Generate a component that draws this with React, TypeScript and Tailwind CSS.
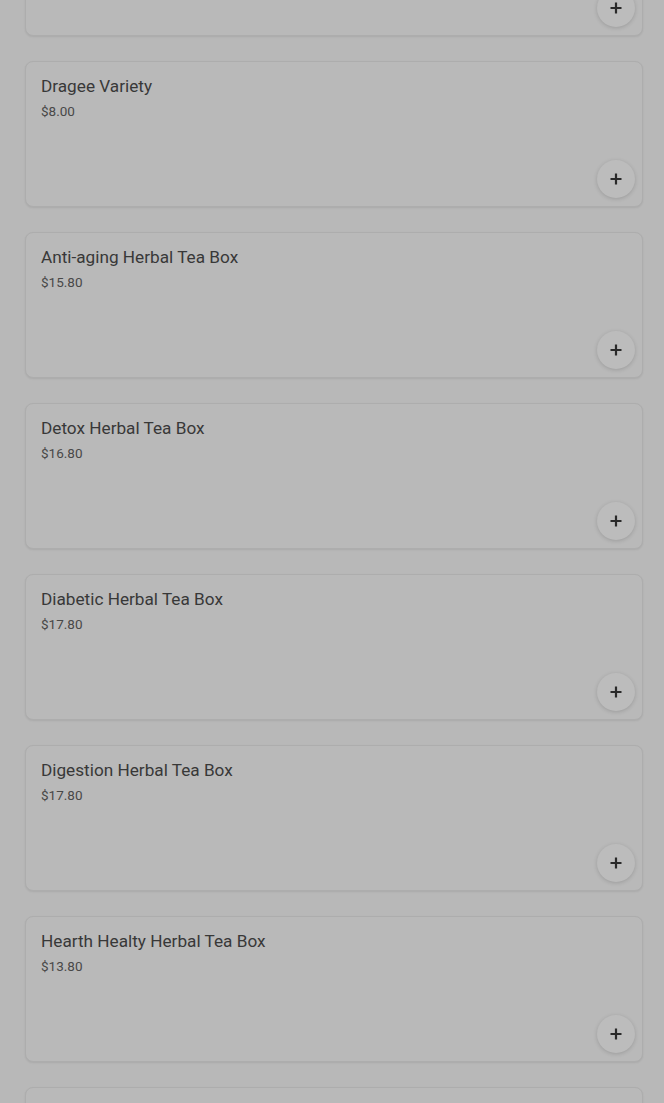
import React from "react";

const items = [
  { name: "Previous", price: "$0.00" },
  { name: "Dragee Variety", price: "$8.00" },
  { name: "Anti-aging Herbal Tea Box", price: "$15.80" },
  { name: "Detox Herbal Tea Box", price: "$16.80" },
  { name: "Diabetic Herbal Tea Box", price: "$17.80" },
  { name: "Digestion Herbal Tea Box", price: "$17.80" },
  { name: "Hearth Healty Herbal Tea Box", price: "$13.80" },
  { name: "Next", price: "$0.00" },
];

function Card({ name, price, hidden }: { name: string; price: string; hidden?: boolean }) {
  return (
    <div className="relative h-[146px] shrink-0 rounded-[8px] border border-[#adadad] bg-[#b9b9b9] shadow-[0_1px_2px_rgba(0,0,0,0.08)] px-[15px] pt-[14px]">
      {!hidden && (
        <>
          <div className="text-[17.2px] leading-[20px] text-[#383838]">{name}</div>
          <div className="mt-[7px] text-[13.5px] leading-[16px] text-[#484848]">{price}</div>
        </>
      )}
      <button className="absolute right-[7px] bottom-[8px] flex h-[38px] w-[38px] items-center justify-center rounded-full bg-[#bcbcbc] shadow-[0_1px_4px_rgba(0,0,0,0.16)]">
        <svg width="12" height="12" viewBox="0 0 12 12">
          <path d="M6 0.5v11M0.5 6h11" stroke="#2a2a2a" strokeWidth="2.2" />
        </svg>
      </button>
    </div>
  );
}

export default function App() {
  return (
    <div
      className="h-[1103px] w-[664px] overflow-hidden bg-[#b8b8b8]"
      style={{ fontFamily: "Roboto, 'Noto Sans', sans-serif" }}
    >
      <div className="mt-[-110px] flex flex-col gap-[25px] pl-[25px] pr-[21px]">
        {items.map((it, i) => (
          <Card key={i} name={it.name} price={it.price} hidden={i === 0 || i === items.length - 1} />
        ))}
      </div>
    </div>
  );
}
